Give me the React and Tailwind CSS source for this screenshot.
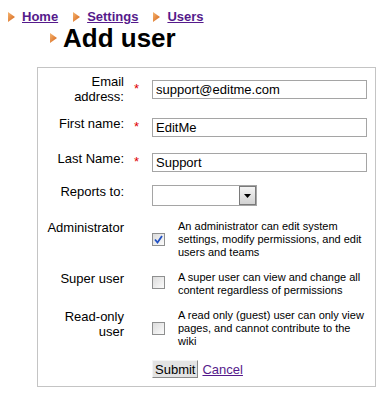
import React, { useState } from "react";

// small orange arrow used in the breadcrumb and page title
function Arrow() {
  return (
    <svg width="7" height="10" viewBox="0 0 7 10" className="shrink-0">
      <defs>
        <linearGradient id="arr" x1="0" y1="0" x2="1" y2="1">
          <stop offset="0" stopColor="#f5b673" />
          <stop offset="1" stopColor="#d45f12" />
        </linearGradient>
      </defs>
      <polygon points="0,0 7,5 0,10" fill="url(#arr)" />
    </svg>
  );
}

function Check({ checked, onChange }) {
  return (
    <button
      type="button"
      onClick={onChange}
      className="w-[13px] h-[13px] border border-[#8e8f8f] bg-gradient-to-br from-[#dcdcdc] to-[#fbfbfb] flex items-center justify-center"
    >
      {checked && (
        <svg width="9" height="9" viewBox="0 0 9 9">
          <path d="M1 4.5 L3.5 7.5 L8 1" stroke="#2151c4" strokeWidth="1.8" fill="none" />
        </svg>
      )}
    </button>
  );
}

const roles = [
  {
    key: "admin",
    label: "Administrator",
    desc: "An administrator can edit system settings, modify permissions, and edit users and teams",
    boxTop: "mt-[13px]",
  },
  {
    key: "super",
    label: "Super user",
    desc: "A super user can view and change all content regardless of permissions",
    boxTop: "mt-[5px]",
  },
  {
    key: "read",
    label: "Read-only user",
    desc: "A read only (guest) user can only view pages, and cannot contribute to the wiki",
    boxTop: "mt-[13px]",
  },
];

export default function App() {
  const [form, setForm] = useState({
    email: "support@editme.com",
    first: "EditMe",
    last: "Support",
    admin: true,
    super: false,
    read: false,
  });

  const handleChange = (e) => {
    setForm({ ...form, [e.target.name]: e.target.value });
  };

  const textFields = [
    { name: "email", label: "Email address:", rowTop: "mt-[6px]", inTop: "mt-[6px]", starTop: "mt-[7px]" },
    { name: "first", label: "First name:", rowTop: "mt-[12px]", inTop: "mt-[2px]", starTop: "mt-[3px]" },
    { name: "last", label: "Last Name:", rowTop: "mt-[14px]", inTop: "mt-[2px]", starTop: "mt-[3px]" },
  ];

  return (
    <div className="min-h-[399px] bg-white text-black font-['Liberation_Sans',Arial,sans-serif] pt-[9px]">
      {/* BREADCRUMB */}
      <div className="flex items-center pl-[8px] text-[13px] leading-[15px] font-bold">
        {["Home", "Settings", "Users"].map((b, i) => (
          <div key={b} className={`flex items-center ${i > 0 ? "ml-[15px]" : ""}`}>
            <Arrow />
            <a href="#" className="ml-[7px] text-[#551a8b] underline">
              {b}
            </a>
          </div>
        ))}
      </div>

      {/* TITLE */}
      <div className="flex items-center pl-[50px] mt-[1px]">
        <Arrow />
        <h1 className="ml-[6px] text-[26px] leading-[26px] font-bold">Add user</h1>
      </div>

      {/* FORM BOX */}
      <form
        onSubmit={(e) => e.preventDefault()}
        className="ml-[37px] mt-[16px] w-[339px] border border-[#c4c4c4] pb-[8px] text-[13px] leading-[15px]"
      >
        {textFields.map((f) => (
          <div key={f.name} className={`flex items-start ${f.rowTop}`}>
            <label className="ml-[4px] w-[82px] text-right">{f.label}</label>
            <div className={`w-[28px] pl-[10px] text-[#e00000] ${f.starTop}`}>*</div>
            <input
              name={f.name}
              value={form[f.name]}
              onChange={handleChange}
              className={`w-[215px] h-[19px] border border-[#a5a5a5] pl-[3px] text-[13px] outline-none ${f.inTop}`}
            />
          </div>
        ))}

        {/* REPORTS TO */}
        <div className="flex items-start mt-[12px]">
          <label className="ml-[4px] w-[82px] text-right">Reports to:</label>
          <div className="w-[28px]" />
          <div className="mt-[1px] w-[105px] h-[21px] border border-[#a5a5a5] flex justify-end">
            <div className="w-[17px] h-full border border-[#7a7a7a] bg-gradient-to-b from-[#f4f4f4] to-[#d2d2d2] flex items-center justify-center">
              <svg width="7" height="4" viewBox="0 0 7 4">
                <polygon points="0,0 7,0 3.5,4" fill="#000" />
              </svg>
            </div>
          </div>
        </div>

        {/* ROLES */}
        {roles.map((r, i) => (
          <div key={r.key} className={`flex items-start ${i === 0 ? "mt-[14px]" : "mt-[12px]"}`}>
            <label className="ml-[4px] w-[82px] text-right">{r.label}</label>
            <div className="w-[28px]" />
            <div className={`w-[26px] ${r.boxTop}`}>
              <Check checked={form[r.key]} onChange={() => setForm({ ...form, [r.key]: !form[r.key] })} />
            </div>
            <p className="w-[190px] text-[11px] leading-[13px]">{r.desc}</p>
          </div>
        ))}

        {/* BUTTONS */}
        <div className="flex items-baseline mt-[12px] pl-[114px]">
          <button
            type="submit"
            className="h-[18px] px-[2px] bg-[#e3e3e3] border border-t-[#f4f4f4] border-l-[#f4f4f4] border-r-[#8a8a8a] border-b-[#8a8a8a] text-[13px] leading-[15px]"
          >
            Submit
          </button>
          <a href="#" className="ml-[4px] text-[#551a8b] underline">
            Cancel
          </a>
        </div>
      </form>
    </div>
  );
}
